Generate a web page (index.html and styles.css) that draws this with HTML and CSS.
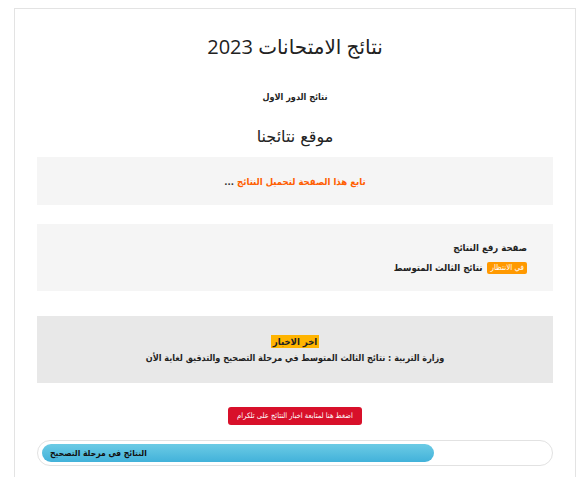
FILE: index.html
```html
<!DOCTYPE html>
<html lang="ar" dir="rtl">
<head>
<meta charset="utf-8">
<title>نتائج الامتحانات 2023</title>
<link rel="stylesheet" href="styles.css">
</head>
<body>
<div class="card">
  <h1 class="title">نتائج الامتحانات 2023</h1>
  <p class="subtitle">نتائج الدور الاول</p>
  <h2 class="site">موقع نتائجنا</h2>

  <div class="box box-notice">
    <span class="orange">تابع هذا الصفحة لتحميل النتائج</span> ...
  </div>

  <div class="box box-upload">
    <div class="upload-head">صفحة رفع النتائج</div>
    <div class="upload-row"><span class="badge">في الانتظار</span> نتائج الثالث المتوسط</div>
  </div>

  <div class="box box-news">
    <div><span class="news-label">اخر الاخبار</span></div>
    <div class="news-text">وزارة التربية : نتائج الثالث المتوسط في مرحلة التصحيح والتدقيق لغاية الأن</div>
  </div>

  <div class="btn-row">
    <a class="btn-red" href="#">اضغط هنا لمتابعة اخبار النتائج على تلكرام</a>
  </div>

  <div class="progress">
    <div class="progress-bar" style="width: 77.5%">النتائج في مرحلة التصحيح</div>
  </div>
</div>
</body>
</html>
```

FILE: styles.css
```css
html, body {
  margin: 0;
  padding: 0;
  background: #ffffff;
}

body {
  font-family: "DejaVu Sans Condensed", "DejaVu Sans", sans-serif;
  color: #222222;
}

.card {
  margin: 8px 11px 0 14px;
  border: 1px solid #e3e3e3;
  border-bottom: none;
  padding: 23px 22px 20px;
  min-height: 460px;
  box-sizing: border-box;
}

.title {
  margin: 0;
  text-align: center;
  font-family: "Open Sans", "DejaVu Sans", sans-serif;
  font-weight: 400;
  font-size: 20px;
  line-height: 30px;
  color: #222222;
}

.subtitle {
  margin: 27px 0 0;
  text-align: center;
  font-size: 9px;
  font-weight: bold;
  line-height: 16px;
  color: #222222;
}

.site {
  margin: 19px 0 0;
  text-align: center;
  font-family: "DejaVu Sans", sans-serif;
  font-size: 16px;
  font-weight: 400;
  line-height: 26px;
  color: #222222;
}

.box {
  background: #f5f5f5;
  font-size: 9.5px;
  font-weight: bold;
}

.box-notice {
  margin-top: 7px;
  height: 48px;
  box-sizing: border-box;
  padding-top: 17px;
  line-height: 16px;
  text-align: center;
  color: #333333;
}

.orange {
  color: #ff5e00;
}

.box-upload {
  margin-top: 19px;
  height: 67px;
  box-sizing: border-box;
  padding: 16px 26px 0;
  text-align: right;
  line-height: 16px;
  color: #222222;
}

.upload-row {
  margin-top: 4px;
}

.badge {
  display: inline-block;
  background: #ff9900;
  color: #ffffff;
  font-weight: normal;
  font-size: 8px;
  line-height: 12px;
  padding: 0 3px;
  border-radius: 2px;
  vertical-align: 1px;
  margin-left: 2px;
}

.box-news {
  margin-top: 25px;
  height: 67px;
  box-sizing: border-box;
  padding-top: 17px;
  background: #e8e8e8;
  text-align: center;
  line-height: 17px;
  color: #222222;
}

.news-label {
  background: #ffb400;
  padding: 1px 2px;
}

.news-text {
  font-size: 9px;
}

.btn-row {
  margin-top: 20px;
  text-align: center;
  height: 18px;
}

.btn-red {
  display: inline-block;
  height: 18px;
  line-height: 18px;
  padding: 0 9px;
  background: #d8102a;
  color: #ffffff;
  font-size: 7.5px;
  text-decoration: none;
  border-radius: 3px;
}

.progress {
  direction: ltr;
  margin-top: 19px;
  height: 26px;
  box-sizing: border-box;
  border: 1px solid #e2e2e2;
  border-radius: 13px;
  padding: 3px 4px;
}

.progress-bar {
  height: 18px;
  line-height: 18px;
  border-radius: 9px;
  background: linear-gradient(to bottom, #6ccbe5, #42b2da);
  color: #111111;
  font-size: 8.5px;
  font-weight: bold;
  text-align: left;
  padding-left: 8px;
  box-sizing: border-box;
  direction: rtl;
  unicode-bidi: plaintext;
}
```
